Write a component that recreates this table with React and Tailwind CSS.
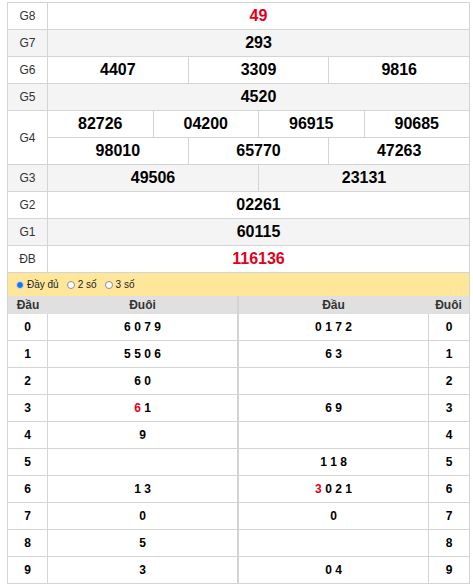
const prizes = [
  { label: "G8", rows: [["49"]], red: true },
  { label: "G7", rows: [["293"]] },
  { label: "G6", rows: [["4407", "3309", "9816"]] },
  { label: "G5", rows: [["4520"]] },
  { label: "G4", rows: [["82726", "04200", "96915", "90685"], ["98010", "65770", "47263"]] },
  { label: "G3", rows: [["49506", "23131"]] },
  { label: "G2", rows: [["02261"]] },
  { label: "G1", rows: [["60115"]] },
  { label: "ĐB", rows: [["116136"]], red: true },
];

// each entry: [digit, isRed]
const dau = [
  [["6"], ["0"], ["7"], ["9"]],
  [["5"], ["5"], ["0"], ["6"]],
  [["6"], ["0"]],
  [["6", true], ["1"]],
  [["9"]],
  [],
  [["1"], ["3"]],
  [["0"]],
  [["5"]],
  [["3"]],
];

const duoi = [
  [["0"], ["1"], ["7"], ["2"]],
  [["6"], ["3"]],
  [],
  [["6"], ["9"]],
  [],
  [["1"], ["1"], ["8"]],
  [["3", true], ["0"], ["2"], ["1"]],
  [["0"]],
  [],
  [["0"], ["4"]],
];

const Digits = ({ list }) => (
  <span>
    {list.map(([d, red], i) => (
      <span key={i} className={red ? "text-[#e3001b]" : ""}>
        {i > 0 ? " " : ""}
        {d}
      </span>
    ))}
  </span>
);

const Radio = ({ checked, label }) => (
  <label className="flex items-center gap-[3px] mr-[8px]">
    {checked ? (
      <span className="w-[8px] h-[8px] rounded-full bg-[#1a73e8] border-[1.5px] border-[#cfe3ff]"></span>
    ) : (
      <span className="w-[8px] h-[8px] rounded-full bg-white border border-[#8f8f8f]"></span>
    )}
    <span>{label}</span>
  </label>
);

export default function App() {
  return (
    <div className="bg-white w-[473px] h-[586px] pt-[2px] pl-[7px]" style={{ fontFamily: '"Liberation Sans", Arial, sans-serif' }}>
      <div className="w-[463px] border-t border-l border-r border-[#d4d4d4]">
        {prizes.map((p, idx) => (
          <div key={p.label} className={`flex border-b border-[#d4d4d4] ${idx % 2 === 1 ? "bg-[#f4f4f4]" : "bg-white"}`}>
            <div className="w-[40px] shrink-0 border-r border-[#d4d4d4] flex items-center justify-center text-[12px] text-[#333]">
              {p.label}
            </div>
            <div className="flex-1 flex flex-col">
              {p.rows.map((r, ri) => (
                <div key={ri} className={`flex h-[26px] ${ri > 0 ? "border-t border-[#d4d4d4] h-[27px]" : ""}`}>
                  {r.map((n, ci) => (
                    <div
                      key={ci}
                      className={`flex-1 flex items-center justify-center text-[16px] font-bold ${ci > 0 ? "border-l border-[#d4d4d4]" : ""} ${p.red ? "text-[#e3001b]" : "text-black"}`}
                    >
                      {n}
                    </div>
                  ))}
                </div>
              ))}
            </div>
          </div>
        ))}
        <div className="h-[23px] bg-[#fee79b] flex items-center pl-[8px] text-[10px] text-[#222]">
          <Radio checked label="Đầy đủ" />
          <Radio label="2 số" />
          <Radio label="3 số" />
        </div>
      </div>
      <div className="w-[463px] flex">
        <div className="w-[231px] border-l border-r border-[#d4d4d4]">
          <div className="flex h-[18px] bg-[#e0e0e0] text-[12px] font-bold text-[#333]">
            <div className="w-[40px] flex items-center justify-center">Đầu</div>
            <div className="flex-1 flex items-center justify-center">Đuôi</div>
          </div>
          {dau.map((list, i) => (
            <div key={i} className="flex h-[27px] border-b border-[#d4d4d4] text-[12px] font-bold text-black">
              <div className="w-[40px] border-r border-[#d4d4d4] flex items-center justify-center">{i}</div>
              <div className="flex-1 flex items-center justify-center">
                <Digits list={list} />
              </div>
            </div>
          ))}
        </div>
        <div className="w-[232px] border-l border-r border-[#d4d4d4]">
          <div className="flex h-[18px] bg-[#e0e0e0] text-[12px] font-bold text-[#333]">
            <div className="flex-1 flex items-center justify-center">Đầu</div>
            <div className="w-[41px] flex items-center justify-center">Đuôi</div>
          </div>
          {duoi.map((list, i) => (
            <div key={i} className="flex h-[27px] border-b border-[#d4d4d4] text-[12px] font-bold text-black">
              <div className="flex-1 border-r border-[#d4d4d4] flex items-center justify-center">
                <Digits list={list} />
              </div>
              <div className="w-[40px] flex items-center justify-center">{i}</div>
            </div>
          ))}
        </div>
      </div>
    </div>
  );
}
